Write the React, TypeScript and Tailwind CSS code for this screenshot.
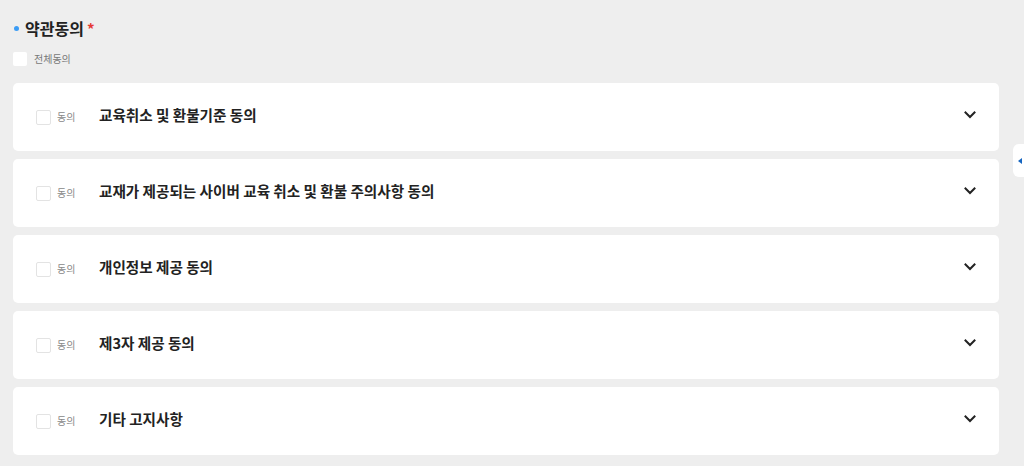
import React from "react";

const items = [
  "교육취소 및 환불기준 동의",
  "교재가 제공되는 사이버 교육 취소 및 환불 주의사항 동의",
  "개인정보 제공 동의",
  "제3자 제공 동의",
  "기타 고지사항",
];

function Chevron() {
  return (
    <svg width="14" height="14" viewBox="0 0 14 14" fill="none">
      <path d="M2.5 4.5 L7 9 L11.5 4.5" stroke="#222" strokeWidth="2" strokeLinecap="square" />
    </svg>
  );
}

export default function App() {
  return (
    <div
      className="relative w-[1024px] h-[466px] bg-[#eeeeee] overflow-hidden"
      style={{ fontFamily: '"Noto Sans CJK KR", "Noto Sans", sans-serif' }}
    >
      <div className="w-[986px] ml-[13px] pt-[16px]">
        <div className="flex items-center h-[24px]">
          <span className="w-[5px] h-[5px] rounded-full bg-[#3b9cf5] ml-[1px] mr-[6px]" />
          <span className="text-[16px] font-bold text-[#222] leading-none">약관동의</span>
          <span className="text-[15px] font-bold text-[#e53935] ml-[3px] leading-none">*</span>
        </div>
        <div className="flex items-center mt-[12px] h-[14px]">
          <span className="w-[14px] h-[14px] bg-white rounded-[2px]" />
          <span className="ml-[7px] text-[10px] text-[#777] leading-none">전체동의</span>
        </div>
        <div className="flex flex-col gap-[8px] mt-[17px]">
          {items.map((t) => (
            <div key={t} className="h-[68px] bg-white rounded-[5px] flex items-center pl-[23px] pr-[22px]">
              <span className="w-[15px] h-[15px] border border-[#e3e3e3] rounded-[2px] bg-white" />
              <span className="ml-[6px] -mt-[1px] text-[10px] text-[#888] leading-none w-[42px]">동의</span>
              <span className="-mt-[3px] text-[14.6px] font-bold text-[#222] leading-none">{t}</span>
              <span className="ml-auto -mt-[5px]">
                <Chevron />
              </span>
            </div>
          ))}
        </div>
      </div>
      <div className="absolute left-[1013px] top-[144px] w-[14px] h-[33px] bg-white rounded-l-[6px] flex items-center pl-[5px]">
        <span className="w-0 h-0 border-y-[3px] border-y-transparent border-r-[4px] border-r-[#1565c0]" />
      </div>
    </div>
  );
}
